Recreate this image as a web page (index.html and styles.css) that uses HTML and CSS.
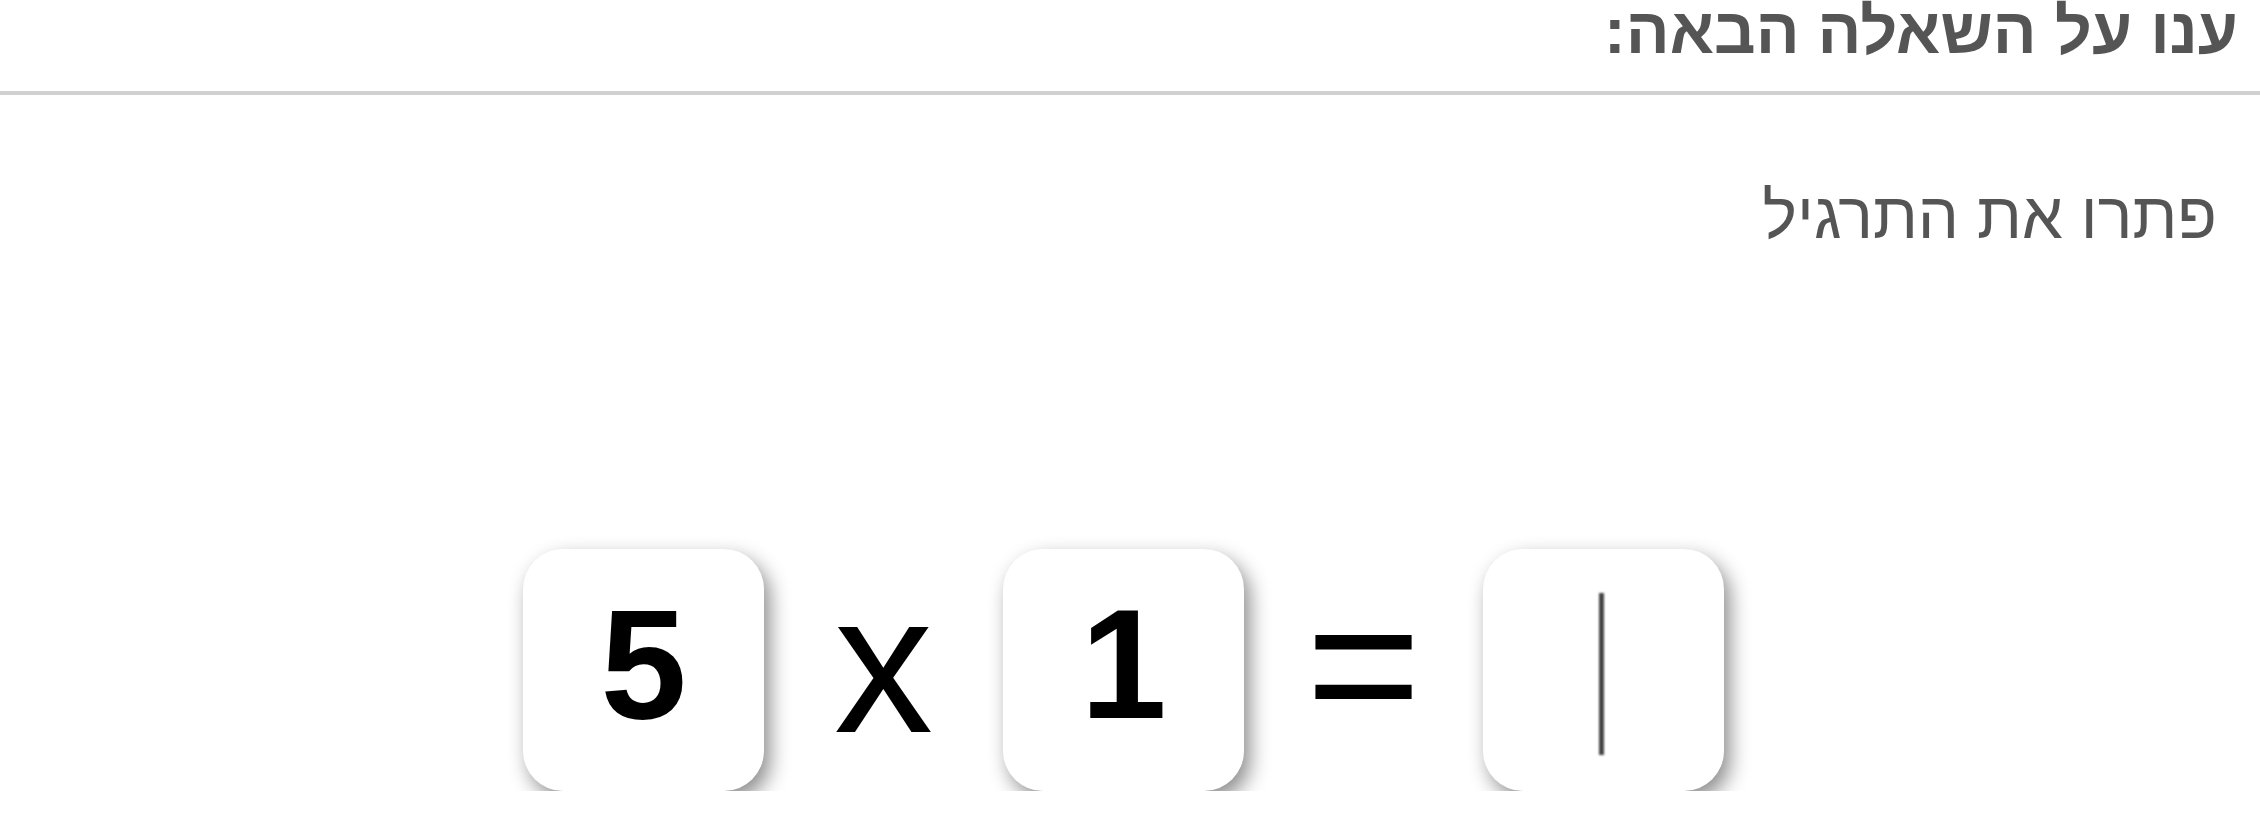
FILE: index.html
```html
<!DOCTYPE html>
<html lang="he" dir="rtl">
	<head>
		<meta charset="UTF-8">
		<meta name="viewport" content="width=device-width, initial-scale=1.0">
		<title>תרגיל</title>

		<link rel="stylesheet" href="styles.css">
	</head>

	<body>
		<header class="top-bar">
			<h1 class="question-title">ענו על השאלה הבאה:</h1>
		</header>

		<main class="exercise">
			<p class="exercise-hint">פתרו את התרגיל</p>

			<div class="equation">
				<div class="card">
					<span class="card-number">5</span>
				</div>

				<div class="operator">x</div>

				<div class="card">
					<span class="card-number">1</span>
				</div>

				<div class="operator">=</div>

				<div class="card answer-card">
					<span class="caret"></span>
				</div>
			</div>
		</main>
	</body>
</html>
```

FILE: styles.css
```css
body {
	margin: 0;
	padding: 0;
	font-family: "Liberation Sans", Arial, sans-serif;
	background-color: #fff;
	color: #555;
}

.top-bar {
	padding: 0 22px;
	border-bottom: 4px solid #d1d1d1;
	height: 93px;
	box-sizing: content-box;
}

.question-title {
	margin: 0;
	margin-top: -2px;
	font-size: 65px;
	font-weight: bold;
	line-height: 1;
}

.exercise-hint {
	margin: 0;
	padding: 88px 43px 0;
	font-size: 65px;
	line-height: 1;
}

.equation {
	direction: ltr;
	display: flex;
	justify-content: center;
	align-items: center;
	padding-right: 13px;
	margin-top: 301px;
}

.card {
	width: 241px;
	height: 242px;
	border-radius: 40px;
	background-color: #fff;
	box-shadow: 6px 9px 20px rgba(0, 0, 0, 0.45);
	display: flex;
	align-items: center;
	justify-content: center;
}

.card-number {
	font-size: 155px;
	font-weight: bold;
	color: #000;
	line-height: 1;
	margin-bottom: 12px;
}

.operator {
	width: 239px;
	text-align: center;
	font-size: 198px;
	color: #000;
	line-height: 1;
	margin-bottom: 12px;
}

.caret {
	display: block;
	width: 5px;
	height: 162px;
	background-color: #444;
	filter: blur(1.3px);
	margin: 7px 4px 0 0;
}
```
